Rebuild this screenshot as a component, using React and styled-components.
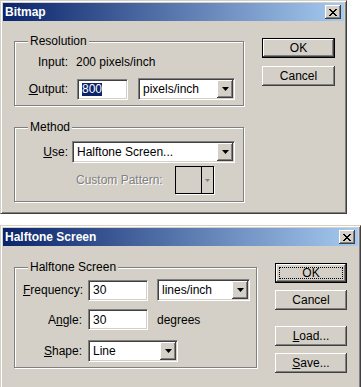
import React from 'react';
import styled, { createGlobalStyle } from 'styled-components';

const GlobalStyle = createGlobalStyle`
  body {
    margin: 0;
    background: #fff;
    color: #000;
    font-family: "Liberation Sans", Arial, sans-serif;
    font-size: 12px;
  }
`;

const raised = `
  box-shadow: inset -1px -1px #404040, inset 1px 1px #fff, inset -2px -2px #808080,
    inset 2px 2px #d4d0c8;
`;

const Window = styled.div`
  box-sizing: border-box;
  width: ${({ $width }) => $width}px;
  margin-top: ${({ $top }) => $top || 0}px;
  padding: 2px;
  background: #d4d0c8;
  border: 1px solid;
  border-color: #d4d0c8 #404040 #404040 #d4d0c8;
  box-shadow: inset 1px 1px #fff, inset -1px -1px #808080;
`;

const TitleBar = styled.div`
  display: flex;
  align-items: center;
  justify-content: space-between;
  height: 18px;
  padding: 0 3px 0 2px;
  background: linear-gradient(to right, #0a246a, #a6caf0);
  color: #fff;
  font-weight: bold;
  font-size: 12px;
`;

const CloseButton = styled.div`
  box-sizing: border-box;
  width: 16px;
  height: 14px;
  display: flex;
  align-items: center;
  justify-content: center;
  background: #d4d0c8;
  ${raised};
`;

const Body = styled.div`
  display: flex;
  align-items: flex-start;
  gap: 18px;
  padding: 17px ${({ $right }) => $right}px ${({ $bottom }) => $bottom}px 11px;
`;

const GroupColumn = styled.div`
  display: flex;
  flex-direction: column;
  padding-top: ${({ $top }) => $top}px;
`;

const ButtonColumn = styled.div`
  display: flex;
  flex-direction: column;
`;

const Group = styled.div`
  position: relative;
  box-sizing: border-box;
  width: ${({ $width }) => $width}px;
  margin-top: ${({ $mt }) => $mt || 0}px;
  padding: ${({ $pad }) => $pad};
  border: 1px solid #808080;
  box-shadow: inset 1px 1px #fff, 1px 1px #fff;
`;

const Legend = styled.span`
  position: absolute;
  top: -8px;
  left: 13px;
  padding: 0 2px;
  line-height: 14px;
  background: #d4d0c8;
`;

const Row = styled.div`
  display: flex;
  align-items: center;
  gap: ${({ $gap }) => $gap}px;
  margin-top: ${({ $mt }) => $mt || 0}px;
  padding-left: ${({ $indent }) => $indent || 0}px;
`;

const Label = styled.span`
  flex-shrink: 0;
  width: ${({ $width }) => $width}px;
  text-align: right;
  line-height: 16px;
`;

const Text = styled.span`
  line-height: 16px;
  margin-left: ${({ $ml }) => $ml || 0}px;
`;

const Key = styled.span`
  text-decoration: underline;
  text-underline-offset: 1px;
`;

const sunken = `
  box-sizing: border-box;
  background: #fff;
  border: 1px solid;
  border-color: #808080 #fff #fff #808080;
  box-shadow: inset 1px 1px #404040, inset -1px -1px #d4d0c8;
`;

const TextBox = styled.div`
  ${sunken};
  display: flex;
  align-items: center;
  width: ${({ $width }) => $width}px;
  height: 21px;
  padding: 0 4px;
`;

const Selected = styled.span`
  background: #0a246a;
  color: #fff;
  line-height: 13px;
`;

const SelectBox = styled.div`
  ${sunken};
  display: flex;
  width: ${({ $width }) => $width}px;
  height: 22px;
  padding: 1px;
  margin-left: ${({ $ml }) => $ml || 0}px;
`;

const SelectValue = styled.span`
  flex: 1;
  padding-left: 3px;
  line-height: 18px;
  white-space: nowrap;
`;

const ArrowButton = styled.div`
  box-sizing: border-box;
  width: 16px;
  display: flex;
  align-items: center;
  justify-content: center;
  background: #d4d0c8;
  ${raised};
`;

const Button = styled.button`
  position: relative;
  box-sizing: border-box;
  width: ${({ $width }) => $width}px;
  height: 20px;
  margin-top: ${({ $mt }) => $mt || 0}px;
  padding: 0;
  font: inherit;
  color: #000;
  background: #d4d0c8;
  border: ${({ $default }) => ($default ? '1px solid #000' : 'none')};
  ${raised};

  &::after {
    content: '';
    display: ${({ $focused }) => ($focused ? 'block' : 'none')};
    position: absolute;
    inset: 3px;
    border: 1px dotted #000;
  }
`;

const DisabledText = styled.span`
  width: ${({ $width }) => $width}px;
  line-height: 16px;
  color: #808080;
  text-shadow: 1px 1px #fff;
`;

const Swatch = styled.div`
  box-sizing: border-box;
  display: flex;
  width: 39px;
  height: 28px;
  border: 1px solid #000;
  box-shadow: 1px 1px #fff;
`;

const SwatchArrow = styled.div`
  margin-left: auto;
  width: 11px;
  display: flex;
  align-items: center;
  justify-content: center;
  border-left: 1px solid #000;
`;

const CloseIcon = () => (
  <svg width="8" height="7" viewBox="0 0 8 7" shapeRendering="crispEdges">
    <path d="M0 0h2l2 2.5L6 0h2L5 3.5 8 7H6L4 4.5 2 7H0l3-3.5z" fill="#000" />
  </svg>
);

const DownArrow = ({ color = '#000', w = 7, h = 4 }) => (
  <svg width={w} height={h} viewBox={`0 0 ${w} ${h}`}>
    <path d={`M0 0h${w}L${w / 2} ${h}z`} fill={color} />
  </svg>
);

const Select = ({ width, ml, children }) => (
  <SelectBox $width={width} $ml={ml}>
    <SelectValue>{children}</SelectValue>
    <ArrowButton>
      <DownArrow />
    </ArrowButton>
  </SelectBox>
);

const Title = ({ children }) => (
  <TitleBar>
    <span>{children}</span>
    <CloseButton>
      <CloseIcon />
    </CloseButton>
  </TitleBar>
);

const BitmapDialog = () => (
  <Window $width={347}>
    <Title>Bitmap</Title>
    <Body $right={9} $bottom={9}>
      <GroupColumn $top={3}>
        <Group $width={230} $pad="12px 8px 5px 8px">
          <Legend>Resolution</Legend>
          <Row $gap={8}>
            <Label $width={45}>Input:</Label>
            <Text>200 pixels/inch</Text>
          </Row>
          <Row $gap={9} $mt={8}>
            <Label $width={45}>
              <Key>O</Key>utput:
            </Label>
            <TextBox $width={51}>
              <Selected>800</Selected>
            </TextBox>
            <Select width={97} ml={1}>
              pixels/inch
            </Select>
          </Row>
        </Group>
        <Group $width={230} $mt={21} $pad="13px 8px 7px 8px">
          <Legend>Method</Legend>
          <Row $gap={4}>
            <Label $width={45}>
              <Key>U</Key>se:
            </Label>
            <Select width={163}>Halftone Screen...</Select>
          </Row>
          <Row $gap={0} $mt={3} $indent={53}>
            <DisabledText $width={99}>Custom Pattern:</DisabledText>
            <Swatch>
              <SwatchArrow>
                <DownArrow color="#808080" w={5} h={3} />
              </SwatchArrow>
            </Swatch>
          </Row>
        </Group>
      </GroupColumn>
      <ButtonColumn>
        <Button $width={73} $default>
          OK
        </Button>
        <Button $width={73} $mt={8}>
          Cancel
        </Button>
      </ButtonColumn>
    </Body>
  </Window>
);

const HalftoneDialog = () => (
  <Window $width={361} $top={11}>
    <Title>Halftone Screen</Title>
    <Body $right={11} $bottom={15}>
      <GroupColumn $top={4}>
        <Group $width={243} $pad="11px 6px 5px 8px">
          <Legend>Halftone Screen</Legend>
          <Row $gap={6}>
            <Label $width={59}>
              <Key>F</Key>requency:
            </Label>
            <TextBox $width={60}>30</TextBox>
            <Select width={93} ml={3}>
              lines/inch
            </Select>
          </Row>
          <Row $gap={6} $mt={8}>
            <Label $width={59}>
              A<Key>n</Key>gle:
            </Label>
            <TextBox $width={60}>30</TextBox>
            <Text $ml={3}>degrees</Text>
          </Row>
          <Row $gap={6} $mt={10}>
            <Label $width={59}>
              <Key>S</Key>hape:
            </Label>
            <Select width={90}>Line</Select>
          </Row>
        </Group>
      </GroupColumn>
      <ButtonColumn>
        <Button $width={72} $default $focused>
          OK
        </Button>
        <Button $width={72} $mt={7}>
          Cancel
        </Button>
        <Button $width={72} $mt={16}>
          <Key>L</Key>oad...
        </Button>
        <Button $width={72} $mt={7}>
          <Key>S</Key>ave...
        </Button>
      </ButtonColumn>
    </Body>
  </Window>
);

const App = () => (
  <>
    <GlobalStyle />
    <BitmapDialog />
    <HalftoneDialog />
  </>
);

export default App;
